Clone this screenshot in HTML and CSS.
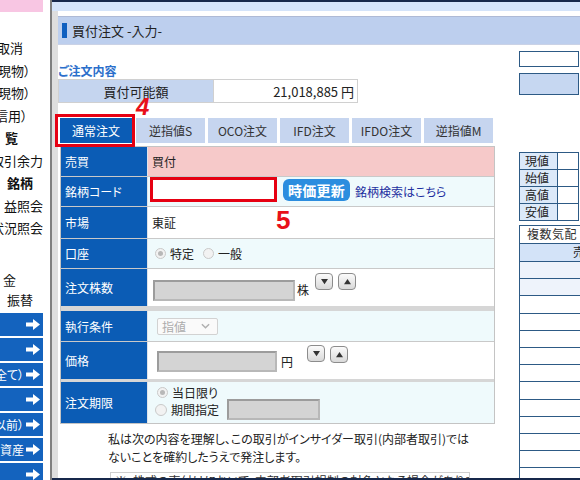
FILE: index.html
```html
<!DOCTYPE html>
<html lang="ja">
<head>
<meta charset="utf-8">
<title>買付注文 -入力-</title>
<link rel="stylesheet" href="styles.css">
</head>
<body>
<div class="page">
  <aside class="side">
    <div class="pink"></div>
    <ul class="menu">
      <li class="x-3">取消</li>
      <li class="x-2">現物）</li>
      <li class="x-2">現物）</li>
      <li class="x-5">信用）</li>
      <li class="x5 bold">覧</li>
      <li class="x-9">取引余力</li>
      <li class="x7 bold">銘柄</li>
      <li class="x4">益照会</li>
      <li class="x-9">状況照会</li>
    </ul>
    <ul class="menu2">
      <li class="x3">金</li>
      <li class="x7">振替</li>
    </ul>
    <div class="blues">
      <div class="bb"><svg class="arr" viewBox="0 0 14 11"><path d="M0 3.5H7V0L14 5.5 7 11V7.5H0Z" fill="#fff"/></svg></div>
      <div class="bb"><svg class="arr" viewBox="0 0 14 11"><path d="M0 3.5H7V0L14 5.5 7 11V7.5H0Z" fill="#fff"/></svg></div>
      <div class="bb"><span>全て）</span><svg class="arr" viewBox="0 0 14 11"><path d="M0 3.5H7V0L14 5.5 7 11V7.5H0Z" fill="#fff"/></svg></div>
      <div class="bb"><svg class="arr" viewBox="0 0 14 11"><path d="M0 3.5H7V0L14 5.5 7 11V7.5H0Z" fill="#fff"/></svg></div>
      <div class="bb"><span>以前）</span><svg class="arr" viewBox="0 0 14 11"><path d="M0 3.5H7V0L14 5.5 7 11V7.5H0Z" fill="#fff"/></svg></div>
      <div class="bb"><span>資産</span><svg class="arr" viewBox="0 0 14 11"><path d="M0 3.5H7V0L14 5.5 7 11V7.5H0Z" fill="#fff"/></svg></div>
      <div class="bb"><svg class="arr" viewBox="0 0 14 11"><path d="M0 3.5H7V0L14 5.5 7 11V7.5H0Z" fill="#fff"/></svg></div>
    </div>
  </aside>

  <main class="main">
    <div class="topband"></div>
    <div class="titlebar"><span class="mark"></span>買付注文 -入力-</div>
    <div class="body">
      <section class="content">
        <div class="sec">ご注文内容</div>
        <div class="kanou">
          <div class="klab">買付可能額</div>
          <div class="kval">21,018,885 円</div>
        </div>

        <div class="tabs">
          <div class="tab active">通常注文</div>
          <div class="tab">逆指値S</div>
          <div class="tab">OCO注文</div>
          <div class="tab">IFD注文</div>
          <div class="tab">IFDO注文</div>
          <div class="tab">逆指値M</div>
        </div>

        <div class="form">
          <div class="row r1 pinkrow">
            <div class="lab">売買</div>
            <div class="val"><span class="txt">買付</span></div>
          </div>
          <div class="row r2 cyan">
            <div class="lab">銘柄コード</div>
            <div class="val">
              <input class="code" type="text">
              <span class="btn">時価更新</span>
              <span class="link">銘柄検索はこちら</span>
            </div>
          </div>
          <div class="row r3">
            <div class="lab">市場</div>
            <div class="val"><span class="txt">東証</span></div>
          </div>
          <div class="row r4 cyan">
            <div class="lab">口座</div>
            <div class="val">
              <span class="radio on r4a"></span><span class="rt">特定</span>
              <span class="radio r4b"></span><span class="rt">一般</span>
            </div>
          </div>
          <div class="row r5 nob">
            <div class="lab">注文株数</div>
            <div class="val top">
              <span class="ginput qty"></span>
              <span class="unit">株</span>
              <span class="sp sp1"><svg viewBox="0 0 10 8"><path d="M1 1h8L5 7z" fill="#333"/></svg></span>
              <span class="sp"><svg viewBox="0 0 10 8"><path d="M1 7h8L5 1z" fill="#333"/></svg></span>
            </div>
          </div>
          <div class="band b5"></div>
          <div class="row r6 cyan">
            <div class="lab">執行条件</div>
            <div class="val">
              <span class="sel">指値<svg viewBox="0 0 10 6"><path d="M1 1l4 4 4-4" stroke="#b0b0b0" stroke-width="1.6" fill="none"/></svg></span>
            </div>
          </div>
          <div class="row r7 nob">
            <div class="lab">価格</div>
            <div class="val top">
              <span class="ginput price"></span>
              <span class="unit yen">円</span>
              <span class="sp sp2"><svg viewBox="0 0 10 8"><path d="M1 1h8L5 7z" fill="#333"/></svg></span>
              <span class="sp"><svg viewBox="0 0 10 8"><path d="M1 7h8L5 1z" fill="#333"/></svg></span>
            </div>
          </div>
          <div class="band b3"></div>
          <div class="row r8 cyan nob">
            <div class="lab">注文期限</div>
            <div class="val col">
              <div class="l1"><span class="radio on"></span><span class="rt">当日限り</span></div>
              <div class="l2"><span class="radio"></span><span class="rt">期間指定</span><span class="ginput date"></span></div>
            </div>
          </div>
        </div>

        <p class="agree">私は次の内容を理解し、この取引がインサイダー取引(内部者取引)では<br>ないことを確約したうえで発注します。</p>
        <div class="notice">※・株式の売付けにおいて、内部者取引規制の対象となる場合があります。</div>
      </section>

      <aside class="quote">
        <div class="q1"></div>
        <div class="q2"></div>
        <div class="qt">
          <div class="qr"><span class="ql">現値</span><span class="qv"></span></div>
          <div class="qr"><span class="ql">始値</span><span class="qv"></span></div>
          <div class="qr"><span class="ql">高値</span><span class="qv"></span></div>
          <div class="qr last"><span class="ql">安値</span><span class="qv"></span></div>
        </div>
        <div class="multi">
          <div class="mh">複数気配</div>
          <div class="ms"><span>売</span></div>
          <div class="mr tint"></div>
          <div class="mr tint"></div>
          <div class="mr"></div>
          <div class="mr"></div>
          <div class="mr"></div>
          <div class="mr"></div>
          <div class="mr"></div>
          <div class="mr"></div>
          <div class="mr"></div>
          <div class="mr"></div>
          <div class="mr"></div>
          <div class="mr"></div>
          <div class="mr"></div>
        </div>
      </aside>
    </div>
  </main>

  <div class="redbox"></div>
  <div class="annot a4">4</div>
  <div class="annot a5">5</div>
</div>
</body>
</html>
```

FILE: styles.css
```css
* { box-sizing: border-box; margin: 0; padding: 0; }
html, body { width: 580px; height: 480px; overflow: hidden; background: #fff; }
body {
  font-family: "Noto Sans CJK JP", "Noto Sans", sans-serif;
  font-size: 12px;
  color: #222;
  font-feature-settings: "palt";
}
ul { list-style: none; }

.page { position: relative; display: flex; width: 580px; height: 480px; }

/* ---------- left sidebar ---------- */
.side {
  width: 52px; flex: none; height: 480px; overflow: hidden;
  border-right: 2px solid #7f7f7f; background: #fff;
}
.pink { width: 43px; height: 12px; background: #f8c6e3; }
.menu { margin-top: 25px; }
.menu li, .menu2 li { white-space: nowrap; font-size: 13px; color: #111; }
.menu li { line-height: 22.5px; height: 22.5px; }
.menu2 { margin-top: 30px; }
.menu2 li { line-height: 20px; height: 20px; }
.bold { font-weight: bold; }
.x-9 { text-indent: -9px; }
.x-5 { text-indent: -5px; }
.x-3 { text-indent: -3px; }
.x-2 { text-indent: -2px; }
.x3 { text-indent: 3px; }
.x4 { text-indent: 4px; }
.x5 { text-indent: 5px; }
.x7 { text-indent: 7px; }

.blues { margin-top: 3px; }
.bb {
  width: 43px; height: 23px; margin-bottom: 2px;
  background: #1463be; color: #fff;
  display: flex; align-items: center; justify-content: flex-end;
  gap: 2px; padding-right: 3px; overflow: hidden; white-space: nowrap;
  font-size: 12px;
}
.bb span { flex: none; }
.arr { width: 14px; height: 11px; flex: none; }

/* ---------- main ---------- */
.main {
  flex: 1; height: 480px; overflow: hidden;
  border-top: 2px solid #16284b; border-bottom: 2px solid #16284b;
  background: linear-gradient(to right, #dedede 0, #dedede 6px, #fff 6px);
  display: flex; flex-direction: column;
}
.topband { height: 9px; background: #d4e4fa; flex: none; }
.titlebar {
  flex: none; margin-top: 5px; margin-left: 6px; height: 29px;
  background: #bdcfee; border-top: 1px solid #aebad6; border-bottom: 1px solid #cad2e6;
  display: flex; align-items: center; padding-left: 4px;
  font-size: 13px; color: #222;
}
.mark { width: 5px; height: 15px; background: #0f5fc0; margin-right: 5px; }

.body { display: flex; flex: 1; }
.content { width: 461px; margin-left: 6px; flex: none; }
.quote { flex: 1; }

.sec { margin-top: 19px; font-size: 12px; line-height: 14px; font-weight: bold; color: #2b6fcb; }
.kanou {
  margin-top: 1px; width: 300px; height: 24px; display: flex;
  border: 1px solid #d0d0d0; font-size: 13px;
}
.klab { width: 154px; background: #c5d5ef; display: flex; align-items: center; justify-content: center; }
.kval { flex: 1; border-left: 1px solid #d0d0d0; display: flex; align-items: center; justify-content: flex-end; padding-right: 3px; }

/* tabs */
.tabs { margin-top: 15px; margin-left: 2px; display: flex; gap: 3px; height: 25px; }
.tab {
  width: 69px; height: 25px; background: #c6d5ef; color: #333;
  display: flex; align-items: center; justify-content: center; font-size: 12px;
}
.tab.active { width: 72px; margin-right: 1px; background: #0b5cb5; color: #fff; }

/* form */
.form { margin-top: 3px; margin-left: 2px; width: 435px; border: 1px solid #c4c4c4; }
.row { display: flex; border-bottom: 1px solid #c9c9c9; background: #fff; }
.row.nob { border-bottom: none; }
.row.pinkrow { background: #f6c9c9; }
.row.cyan { background: #effafc; }
.lab {
  width: 87px; flex: none; background: #0b5cb5; color: #fff;
  border-right: 1px solid #dfe3ea; padding-left: 4px;
  display: flex; align-items: center; font-size: 12px;
}
.val { flex: 1; display: flex; align-items: center; }
.val.top { align-items: flex-start; }
.val.col { flex-direction: column; align-items: flex-start; }
.txt { margin-left: 4px; }

.r1 { height: 30px; }
.r2 { height: 30px; }
.r3 { height: 32px; }
.r4 { height: 30px; }
.r5 { height: 37px; }
.r6 { height: 31px; }
.r7 { height: 37px; }
.r8 { height: 41px; }
.band { background: #d6d6d6; }
.b5 { height: 5px; }
.b3 { height: 3px; }

.code {
  align-self: flex-start; margin-left: 2px; width: 127px; height: 25px;
  border: 3px solid #e60012; background: #fff; outline: none;
}
.btn {
  align-self: flex-start; margin-top: 2px; margin-left: 6px;
  width: 67px; height: 22px; border-radius: 6px; background: #2b8ddf;
  color: #fff; font-weight: bold; font-size: 14px;
  display: flex; align-items: center; justify-content: center; letter-spacing: 0.3px;
}
.link { margin-left: 5px; color: #1d2fa0; font-size: 12px; }

.radio {
  width: 11px; height: 11px; border-radius: 50%; flex: none;
  border: 1px solid #c9c9c9; background: #f2f2f2;
  display: inline-flex; align-items: center; justify-content: center;
}
.radio.on::after { content: ""; width: 5px; height: 5px; border-radius: 50%; background: #b8b8b8; }
.rt { margin-left: 4px; font-size: 12px; color: #222; }
.r4a { margin-left: 7px; }
.r4b { margin-left: 9px; }

.ginput {
  display: block; background: #d4d4d4;
  border: 2px solid #b8b8b8; border-top-color: #9c9c9c; border-left-color: #9c9c9c;
}
.qty { margin-left: 5px; margin-top: 11px; width: 142px; height: 21px; }
.price { margin-left: 9px; margin-top: 9px; width: 120px; height: 21px; }
.unit { margin-left: 2px; margin-top: 13px; font-size: 12px; line-height: 16px; }
.yen { margin-left: 4px; margin-top: 12px; }
.sp {
  width: 18px; height: 17px; margin-left: 5px; margin-top: 4px;
  border: 1px solid #8c8c8c; border-radius: 4px;
  background: linear-gradient(#fbfbfb, #d9d9d9);
  display: flex; align-items: center; justify-content: center;
}
.sp svg { width: 9px; height: 7px; }
.sp1 { margin-left: 6px; }
.sp2 { margin-left: 14px; margin-top: 3px; }

.sel {
  margin-left: 9px; width: 61px; height: 17px;
  border: 1px solid #d2d2d2; border-radius: 2px; background: #fafafa;
  color: #acacac; font-size: 12px; line-height: 15px;
  display: flex; align-items: center; justify-content: space-between; padding: 0 7px 0 4px;
}
.sel svg { width: 9px; height: 6px; }

.l1 { display: flex; align-items: center; height: 14px; margin-top: 3px; margin-left: 9px; }
.l2 { display: flex; align-items: center; height: 21px; margin-left: 7px; }
.l2 .radio { width: 12px; height: 12px; }
.date { margin-left: 8px; width: 93px; height: 21px; }

.agree { margin-top: 6px; margin-left: 50px; font-size: 12px; line-height: 18px; color: #222; }
.notice {
  margin-top: 6px; margin-left: 52px; width: 360px; height: 30px;
  border: 1px solid #cfcfcf; padding: 0 4px; font-size: 12px; line-height: 16px; color: #333; white-space: nowrap; overflow: hidden;
}

/* ---------- right quote panel ---------- */
.q1 { margin-top: 6px; width: 60px; height: 16px; border: 1px solid #2d5a85; background: #fff; }
.q2 { margin-top: 6px; width: 60px; height: 22px; border: 1px solid #2d5a85; background: #c6d7f1; }
.qt { margin-top: 57px; width: 60px; }
.qr { display: flex; height: 17px; border: 1px solid #2d5a85; border-bottom: none; }
.qr.last { height: 18px; border-bottom: 1px solid #2d5a85; }
.ql { width: 38px; background: #dce9f9; border-right: 1px solid #2d5a85; font-size: 12px; line-height: 15px; padding-left: 5px; }
.qv { flex: 1; background: #fff; }

.multi { margin-top: 4px; border-left: 1px solid #2d5a85; }
.mh {
  height: 18px; border-top: 1px solid #2d5a85; background: #fff;
  font-size: 12px; line-height: 16px; padding-left: 7px; color: #333; letter-spacing: 0.5px;
}
.ms {
  height: 18px; border-top: 1px solid #2d5a85; background: #d3e3f8;
  display: flex; justify-content: flex-end; font-size: 12px; line-height: 16px; color: #222;
}
.ms span { margin-right: -5px; }
.mr { height: 17.2px; border-top: 1px solid #2d5a85; background: #fff; }
.mr.tint { background: #eef3fb; }

/* ---------- annotations ---------- */
.redbox {
  position: absolute; left: 55px; top: 114px; width: 80px; height: 33px;
  border: 3px solid #e60012;
}
.annot {
  position: absolute; color: #e8101a; font-family: "Liberation Sans", Arial, sans-serif; font-weight: bold;
}
.a4 { left: 136px; top: 95px; font-size: 24px; line-height: 24px; font-style: italic; }
.a5 { left: 276px; top: 207px; font-size: 26px; line-height: 26px; }
```
